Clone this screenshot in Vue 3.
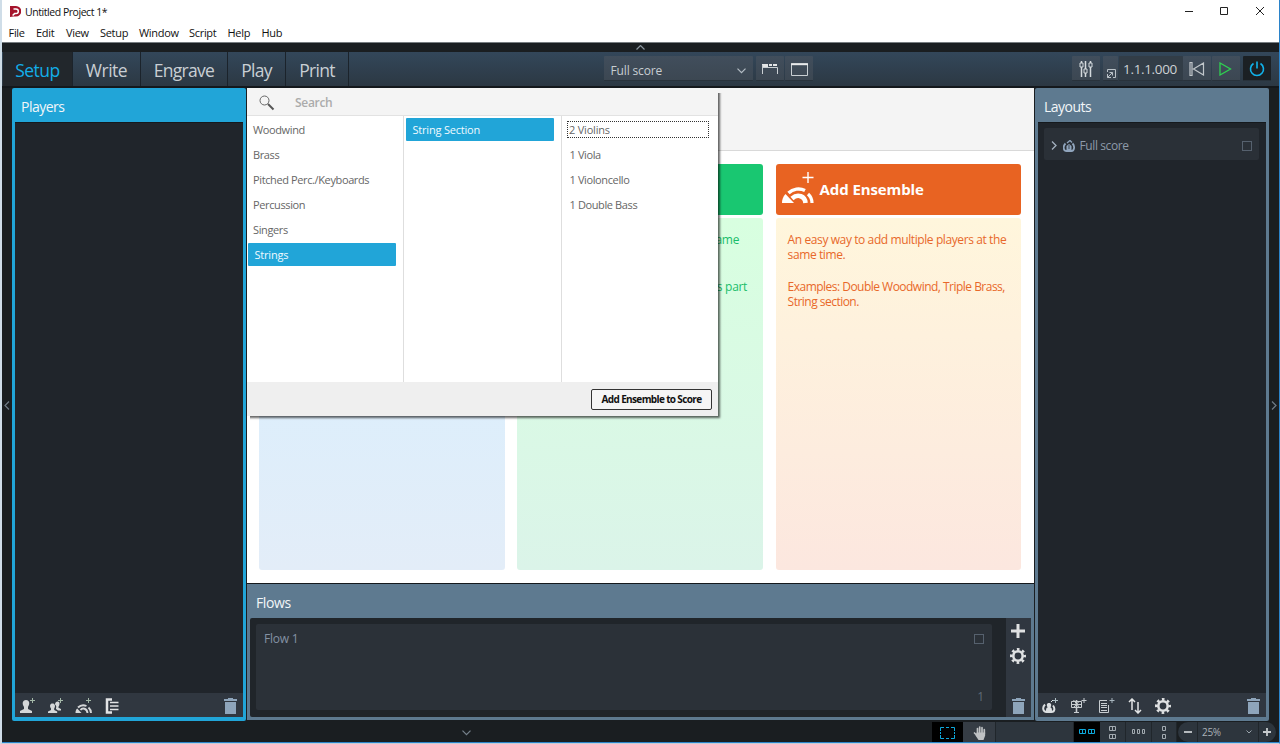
<script setup>
import { ref } from 'vue'

const menus = ['File', 'Edit', 'View', 'Setup', 'Window', 'Script', 'Help', 'Hub']
const modes = ['Setup', 'Write', 'Engrave', 'Play', 'Print']
const mode = ref('Setup')

const families = ['Woodwind', 'Brass', 'Pitched Perc./Keyboards', 'Percussion', 'Singers', 'Strings']
const family = ref('Strings')
const players = ['2 Violins', '1 Viola', '1 Violoncello', '1 Double Bass']
const player = ref('2 Violins')
</script>

<template>
<div class="window">
  <header class="titlebar">
    <svg class="logo" width="11" height="11" viewBox="0 0 11 11">
      <path d="M0 0H6A5 5 0 0 1 6 10.500H3.500L0 11Z" fill="#a5142c" />
      <path d="M3.500 3H6a2.300 2.300 0 0 1 0 4.600H4.600L2.600 9.500" fill="none" stroke="#fff" stroke-width="1.500" />
    </svg>
    <span class="title">Untitled Project 1*</span>
    <svg class="win-buttons" width="80" height="12" viewBox="0 0 80 12" fill="none" stroke="#222" stroke-width="1">
      <path d="M1 6.500H9M36.500 2.500h7v7h-7zM72 2l8 8M80 2l-8 8" />
    </svg>
  </header>
  <nav class="menubar">
    <span v-for="m in menus" :key="m" :class="'m-' + m.toLowerCase()">{{ m }}</span>
  </nav>

  <div class="collapse-top">
    <svg width="9" height="5" viewBox="0 0 9 5"><path d="M.5 4.500l4-4 4 4" fill="none" stroke="#8a959e" stroke-width="1.200" /></svg>
  </div>

  <div class="toolbar">
    <button v-for="m in modes" :key="m" class="mode" :class="['mode-' + m.toLowerCase(), {active: mode === m}]" @click="mode = m">{{ m }}</button>
    <div class="score-select tool">
      <span>Full score</span>
      <svg width="9" height="6" viewBox="0 0 9 6"><path d="M.5 .7l4 4 4-4" fill="none" stroke="#b4bdc5" stroke-width="1.200" /></svg>
    </div>
    <div class="tool view-a">
      <svg width="18" height="12" viewBox="0 0 18 12"><path d="M1 1h6v3H1zM8 1h3v2H8zM12 1h4v2h-4z" fill="#e4e6e7" /><path d="M1.500 2v9M1 4.500h15.500V11" fill="none" stroke="#c9cfd3" /></svg>
    </div>
    <div class="tool view-b">
      <svg width="17" height="13" viewBox="0 0 17 13"><path d="M.5 1h16v11.500H.5z" fill="none" stroke="#c9cfd3" /><path d="M0 1.200h17" stroke="#e8eaeb" stroke-width="2" /></svg>
    </div>
    <div class="tool mixer">
      <svg width="14" height="18" viewBox="0 0 14 18" fill="none" stroke="#d5dadd"><path d="M2.500 1v2M2.500 7v10M6.500 1v8M6.500 13v4M11.500 1v2M11.500 7v10" stroke-width="1.500" /><path d="M1 3h3v4H1zM5 9h3v4H5zM10 3h3v4h-3z" /></svg>
    </div>
    <div class="tool popout">
      <svg width="9" height="9" viewBox="0 0 9 9" fill="none" stroke="#b9c1c7"><path d="M.5 3V.5h8v8H6M.5 8.500L5.500 3.500M2.500 3.500h3v3M.5 5v3.500H4" /></svg>
    </div>
    <div class="tool time">1.1.1.000</div>
    <div class="tool rewind">
      <svg width="16" height="14" viewBox="0 0 16 14" fill="none" stroke="#c1c7cb" stroke-width="1.200"><path d="M1 .5h2v13H1zM14.500 1v12L4.500 7z" /></svg>
    </div>
    <div class="tool play">
      <svg width="13" height="14" viewBox="0 0 13 14"><path d="M1 1v12l10.500-6z" fill="none" stroke="#2fd051" stroke-width="1.300" /></svg>
    </div>
    <div class="tool power">
      <svg width="16" height="16" viewBox="0 0 16 16" fill="none" stroke="#11b3ec" stroke-width="1.600"><path d="M8 .5v7M4.500 2.500a6.500 6.500 0 1 0 7 0" /></svg>
    </div>
  </div>

  <main class="workspace">
    <div class="gutter">
      <svg width="6" height="9" viewBox="0 0 6 9"><path d="M5 .5l-4 4 4 4" fill="none" stroke="#6f7b86" stroke-width="1.200" /></svg>
    </div>

    <section class="panel players">
      <h2>Players</h2>
      <div class="panel-body"></div>
      <div class="panel-foot">
        <svg class="f-solo" width="17" height="17" viewBox="0 0 17 17"><path d="M1 16v-2l4-2v-2C2.500 6 4 3 7 3s4.500 3 2 7v2l4 2v2z" fill="#d5d7d8" /><path d="M13.500 1v5M11 3.500h5" stroke="#a4b8a8" /></svg>
        <svg class="f-section" width="17" height="17" viewBox="0 0 17 17"><path d="M1 16v-1.500l3-1.500v-1.500C2 8.500 3.500 6.500 5.500 6.500S9 8.500 7.200 11.500V13l3 1.500V16z" fill="#d5d7d8" /><path d="M8 7.500C8 4 12.800 3.500 12.500 7c0 1-.5 2-1 2.800v1l2.500 1.200v1.500h-3L9 12v-1c.8-1.300 0-2.500-1-3.500z" fill="#d5d7d8" /><path d="M13.500 1v5M11 3.500h5" stroke="#a4b8a8" /></svg>
        <svg class="f-ensemble" width="17" height="17" viewBox="0 0 17 17"><path d="M3 10.500A7.500 7.500 0 0 1 11.500 9M5.500 13c2-2.800 6.500-1.500 7 3M13.500 10.500c1.700 1.500 2.500 3.500 2.500 5.500" fill="none" stroke="#d5d7d8" stroke-width="1.900" /><path d="M.5 16c0-2 .5-3.500 1.700-4.500l4.300 4.500z" fill="#d5d7d8" /><path d="M13.500 1v5M11 3.500h5" stroke="#a4b8a8" /></svg>
        <svg class="f-group" width="14" height="16" viewBox="0 0 14 16" fill="none" stroke="#e2e4e5"><path d="M7 1.500H2v13h5" stroke-width="2.500" /><path d="M5 4.500h8.500M5 8h8.500M5 11.500h8.500" stroke-width="1.500" /></svg>
        <svg class="bin" width="13" height="16" viewBox="0 0 13 16" fill="#8ea5bb"><path d="M0 1h4V0h5v1h4v2H0zM1 4h11v12H1z" /></svg>
      </div>
    </section>

    <div class="center">
      <div class="start">
        <div class="start-top"></div>
        <div class="cards">
          <article class="card blue"><div class="card-head"></div><div class="card-body"></div></article>
          <article class="card green">
            <div class="card-head"></div>
            <div class="card-body"><p class="same">same</p><p class="part">s part</p></div>
          </article>
          <article class="card orange">
            <div class="card-head">
              <svg width="34" height="34" viewBox="0 0 34 34"><path d="M27 1v11M21.500 6.500h11" stroke="#fff" stroke-width="1.400" /><g fill="none" stroke="#fff"><path d="M7.500 22A14.500 14.500 0 0 1 24 19.500" stroke-width="3.400" /><path d="M11 27.500c6-5.500 13-2 13.500 4.500" stroke-width="4.600" /><path d="M27 23c2.800 2.500 4 5.500 4 9" stroke-width="3.200" /></g><path d="M1 32c0-3.500 1-6.500 3.500-9L13 32z" fill="#fff" /></svg>
              <b>Add Ensemble</b>
            </div>
            <div class="card-body"><p>An easy way to add multiple players at the<br>same time.</p><p class="examples">Examples: Double Woodwind, Triple Brass,<br>String section.</p></div>
          </article>
        </div>

        <div class="picker">
          <div class="search">
            <svg width="16" height="16" viewBox="0 0 16 16"><circle cx="5.500" cy="5.500" r="4.500" fill="none" stroke="#666" /><path d="M9 9l5.500 5.500" stroke="#555" stroke-width="2" /></svg>
            <span>Search</span>
          </div>
          <div class="columns">
            <ul class="families"><li v-for="f in families" :key="f" :class="{selected: f === family}" @click="family = f">{{ f }}</li></ul>
            <ul class="ensembles"><li class="selected">String Section</li></ul>
            <ul class="instruments"><li v-for="p in players" :key="p" :class="{focused: p === player}" @click="player = p">{{ p }}</li></ul>
          </div>
          <div class="picker-foot"><button>Add Ensemble to Score</button></div>
        </div>
      </div>

      <section class="flows">
        <h2>Flows</h2>
        <div class="flows-inner">
          <div class="flow-card">
            <span>Flow 1</span><i class="check"></i><small>1</small>
          </div>
          <div class="flow-tools">
            <svg width="14" height="14" viewBox="0 0 14 14"><path d="M7 0v14M0 7h14" stroke="#dfe1e2" stroke-width="3" /></svg>
            <svg class="gear" width="16" height="16" viewBox="0 0 16 16"><circle cx="8" cy="8" r="6.700" fill="none" stroke="#dfe1e2" stroke-width="2.600" stroke-dasharray="2.600 2.662" stroke-dashoffset="1.300" /><circle cx="8" cy="8" r="4.700" fill="none" stroke="#dfe1e2" stroke-width="2.600" /></svg>
            <svg class="bin" width="13" height="16" viewBox="0 0 13 16" fill="#8ea5bb"><path d="M0 1h4V0h5v1h4v2H0zM1 4h11v12H1z" /></svg>
          </div>
        </div>
      </section>
    </div>

    <section class="panel layouts">
      <h2>Layouts</h2>
      <div class="panel-body">
        <div class="layout-row">
          <svg width="6" height="9" viewBox="0 0 6 9"><path d="M1 .5l4 4-4 4" fill="none" stroke="#a4b2c0" stroke-width="1.300" /></svg>
          <svg class="score-icon" width="12" height="12" viewBox="0 0 12 12"><path d="M2.500 3.500C-.5 6.500.5 11 3.500 11h5c3 0 3.500-5 1-7.500" fill="none" stroke="#90a5bd" stroke-width="1.800" /><path d="M3.500 11V6L6 4l2.500 2v5z" fill="#90a5bd" /><path d="M4 3l3-2.500 2 2" fill="none" stroke="#90a5bd" stroke-width="1.300" /><path d="M6 5v4" stroke="#2a3038" stroke-width=".8" /></svg>
          <span>Full score</span>
          <i class="check"></i>
        </div>
      </div>
      <div class="panel-foot">
        <svg class="l-score" width="17" height="17" viewBox="0 0 17 17"><path d="M3 7.500c-3 3-2 7.500 1.500 7.500h5c3.500 0 3.500-4 1.500-6.500" fill="none" stroke="#dcdfe1" stroke-width="2" /><path d="M4 15c0-3 0-4.500 1.700-4.500C4 7.500 5 6 7 6s3 1.500 1.500 4.500C10 11 10 12 10 15z" fill="#dcdfe1" /><path d="M9 5l2-2" stroke="#dcdfe1" /><path d="M13.500 1v5M11 3.500h5" stroke="#aebfc5" /></svg>
        <svg class="l-part" width="17" height="17" viewBox="0 0 17 17" fill="none" stroke="#c8cdd1"><path d="M1.500 4.500h10v6h-10zM1.500 7.500h10M3.500 3l6 7.500M9.500 4l-6 6.500M4 15.500h5" /><path d="M6.500 3v12" stroke-width="1.600" /><path d="M14 1v5M11.500 3.500h5" /></svg>
        <svg class="l-custom" width="17" height="17" viewBox="0 0 17 17" fill="none" stroke="#c8cdd1"><path d="M9 3.500H1.500v12h9V8M3 6.500h6M3 8.500h6M3 10.500h6M3 13.500h6" /><path d="M14 1v5M11.500 3.500h5" stroke="#a8b6be" /></svg>
        <svg class="l-sort" width="14" height="16" viewBox="0 0 14 16" fill="none" stroke="#e3e5e6" stroke-width="1.500"><path d="M4 12V1M1 4l3-3 3 3M10 4v11M7 12l3 3 3-3" /></svg>
        <svg class="l-gear" width="16" height="16" viewBox="0 0 16 16"><circle cx="8" cy="8" r="6.700" fill="none" stroke="#dfe1e2" stroke-width="2.600" stroke-dasharray="2.600 2.662" stroke-dashoffset="1.300" /><circle cx="8" cy="8" r="4.700" fill="none" stroke="#dfe1e2" stroke-width="2.600" /></svg>
        <svg class="bin" width="13" height="16" viewBox="0 0 13 16" fill="#8ea5bb"><path d="M0 1h4V0h5v1h4v2H0zM1 4h11v12H1z" /></svg>
      </div>
    </section>

    <div class="gutter right">
      <svg width="6" height="9" viewBox="0 0 6 9"><path d="M1 .5l4 4-4 4" fill="none" stroke="#6f7b86" stroke-width="1.200" /></svg>
    </div>
  </main>

  <footer class="status">
    <svg class="down" width="9" height="6" viewBox="0 0 9 6"><path d="M.5 .7l4 4 4-4" fill="none" stroke="#76828c" stroke-width="1.200" /></svg>
    <div class="s-marquee"><svg width="15" height="12" viewBox="0 0 15 12"><path d="M.5 4V.5H4M6 .5h3M11 .5h3.500V4M14.500 5v2M14.500 8v3.500H11M9 11.500H6M4 11.500H.5V8M.5 7V5" fill="none" stroke="#0da9dc" /></svg></div>
    <div class="s-hand"><svg width="14" height="14" viewBox="0 0 14 14"><path d="M4.500 8V2.500M6.700 7V1M9 7V1.700M11.300 8V3.700M4.500 10L1.500 7" stroke="#bfc2c4" stroke-width="1.700" stroke-linecap="round" /><path d="M3.700 6.500h8.400v3.200L10.500 14h-5L2.500 9.500z" fill="#bfc2c4" /></svg></div>
    <div class="s-space"></div>
    <div class="s-cell first"><svg width="17" height="6" viewBox="0 0 17 6" fill="none" stroke="#0da9dc"><path d="M.5.500h6v4h-6zM3.500.500v4M9.500.500h6v4h-6zM12.500.500v4" /></svg></div>
    <div class="s-cell second"><svg width="8" height="13" viewBox="0 0 8 13" fill="none" stroke="#a3abb1"><path d="M.5.500h6v4h-6zM3.500.500v4M.5 8.500h6v4h-6zM3.500 8.500v4" /></svg></div>
    <div class="s-cell third"><svg width="13" height="6" viewBox="0 0 13 6" fill="none" stroke="#a3abb1"><path d="M.5.500h2v4h-2zM5.500.500h2v4h-2zM10.500.500h2v4h-2z" /></svg></div>
    <div class="s-cell fourth"><svg width="4" height="13" viewBox="0 0 4 13" fill="none" stroke="#a3abb1"><path d="M.5.500h3v4h-3zM.5 8.500h3v4h-3z" /></svg></div>
    <div class="s-minus"><svg width="8" height="8" viewBox="0 0 8 8"><path d="M0 4h8" stroke="#c6cacd" stroke-width="1.800" /></svg></div>
    <div class="s-zoom"><span>25%</span><svg width="6" height="4" viewBox="0 0 6 4"><path d="M.5 .5l2.500 2.500 2.500-2.500" fill="none" stroke="#9aa4ac" /></svg></div>
    <div class="s-plus"><svg width="8" height="8" viewBox="0 0 8 8"><path d="M0 4h8M4 0v8" stroke="#c6cacd" stroke-width="1.800" /></svg></div>
  </footer>
</div>
</template>

<style>
body { margin: 0; overflow: hidden; }
</style>

<style scoped>
* { box-sizing: border-box; }
.window {
  width: 1280px;
  height: 744px;
  display: flex;
  flex-direction: column;
  background: #1a1e21;
  border-left: 2px solid #cfdde8;
  border-right: 1px solid #2b83c9;
  border-bottom: 1px solid #c3ced9;
  font-family: "Open Sans", "Noto Sans", sans-serif;
  overflow: hidden;
}
svg { display: block; flex: none; }
button { font-family: inherit; }
h2, p, ul { margin: 0; padding: 0; }
.titlebar { height: 23px; background: #fff; display: flex; align-items: center; padding-left: 8px; flex: none; }
.title { font-size: 10.5px; letter-spacing: -0.45px; color: #111; margin-left: 4px; flex: 1; }
.win-buttons { margin: 0 15px 1px 0; }
.menubar { height: 20px; flex: none; background: #fff; border-bottom: 1px solid #777d81; display: flex; font-size: 11px; line-height: 20px; letter-spacing: -0.3px; color: #111; }
.menubar span { white-space: nowrap; }
.m-file { margin-left: 6.5px; width: 27.5px; }
.m-edit { width: 30px; }
.m-view { width: 34px; }
.m-setup { width: 39px; }
.m-window { width: 50px; }
.m-script { width: 38.5px; }
.m-help { width: 34px; }
.collapse-top { height: 9px; flex: none; display: flex; justify-content: center; align-items: center; }

.toolbar { height: 36px; flex: none; display: flex; background: linear-gradient(#33475a, #2c3843); border-bottom: 2px solid #14181c; padding-left: 1px; }
.mode { border: 0; padding: 2px 0 0; background: none; border-right: 1px solid #1b232b; color: #c9cfd4; font-size: 17.5px; letter-spacing: -0.7px; line-height: 32px; white-space: nowrap; }
.mode.active { background: #22272c; color: #12aee8; }
.mode-setup { width: 70px; letter-spacing: -0.5px; }
.mode-write { width: 68px; letter-spacing: -0.5px; }
.mode-engrave { width: 87px; }
.mode-play { width: 58px; }
.mode-print { width: 63px; }
.tool { height: 25px; margin-top: 4px; background: linear-gradient(#414e5c, #3c4752); display: flex; align-items: center; justify-content: center; border-radius: 1px; border-bottom: 1px solid #28323b; padding-top: 1px; }
.score-select { width: 149px; margin-left: 255px; justify-content: space-between; padding: 5px 7px 0 6.5px; color: #c8cdd1; font-size: 12px; letter-spacing: -0.15px; }
.view-a { width: 28px; margin-left: 3px; }
.view-b { width: 28px; margin-left: 1px; }
.view-b svg { margin: 1px 0 0 1px; }
.mixer { width: 28px; margin-left: 259px; }
.popout { width: 15px; margin-left: 3px; padding: 10px 0 0 1px; }
.time { width: 64px; margin-left: 1px; background: #323d47; color: #cdd1d4; font-size: 13.5px; letter-spacing: -0.35px; padding: 1px 2px 0 0; }
.rewind { width: 28px; padding-right: 1px; }
.play { width: 28px; margin-left: 1px; padding-right: 2px; }
.power { width: 28px; margin-left: 3px; background: #1b2024; padding-top: 2px; }

.workspace { height: 634px; flex: none; display: flex; }
.gutter { width: 10px; flex: none; display: flex; align-items: center; justify-content: center; padding-top: 1px; }
.gutter.right { width: 10px; padding-right: 1px; }
.panel { width: 234px; height: 633px; padding: 0 3px 4px; display: flex; flex-direction: column; border-radius: 2px; background: #5e7a90; }
.players { background: #21a5d8; }
.layouts { margin-left: 1px; }
h2 { height: 34px; padding: 2px 0 0 6px; font-weight: 400; font-size: 14px; line-height: 34px; letter-spacing: -0.4px; color: #f2f6f8; }
.players h2 { letter-spacing: -0.5px; }
.layouts h2 { letter-spacing: -0.5px; }
.panel-body { flex: 1; background: #20252b; border-top: 1px solid #15191d; }
.panel-foot { height: 24px; background: #303740; display: flex; align-items: center; padding: 1px 0 0 4px; }
.panel-foot .bin { margin-left: auto; margin-right: 6px; }
.f-section { margin-left: 11px; }
.f-ensemble { margin-left: 11px; }
.f-group { margin-left: 13px; }
.layout-row { height: 32px; margin: 5px 7px 0 6px; padding: 3px 7px 0; background: #2a3037; border-radius: 2px; display: flex; align-items: center; color: #8d9aa9; font-size: 12px; letter-spacing: -0.35px; }
.score-icon { margin: 0 4.5px 0 6px; }
.layout-row span { letter-spacing: -0.4px; }
.check { width: 10px; height: 10px; border: 1px solid #56616e; margin-left: auto; }
.layout-row span { letter-spacing: -0.4px; }
.l-part { margin-left: 11px; }
.l-custom { margin-left: 11px; }
.l-sort { margin-left: 13px; }
.l-gear { margin-left: 13px; }

.center { width: 787px; margin-left: 1px; flex: none; }
.start { position: relative; height: 496px; background: #fff; border-bottom: 1px solid #15191d; }
.start-top { height: 63px; background: #f4f4f4; border-bottom: 1px solid #d9d9d9; }
.cards { display: flex; gap: 12.5px; padding: 12.500px 12px; }
.card { width: 245.8px; }
.card-head { height: 51.5px; border-radius: 3px; display: flex; align-items: center; }
.card-body { height: 351.5px; margin-top: 3px; border-radius: 3px; padding: 13.5px 12px; font-size: 12px; line-height: 15.7px; letter-spacing: -0.4px; white-space: nowrap; }
.card-body p + p { margin-top: 15.7px; }
.card-body .examples { letter-spacing: -0.52px; }
.blue .card-head { background: #2b8fd8; }
.blue .card-body { background: linear-gradient(#d6efff, #e3edf8); }
.green .card-head { background: #19c771; }
.green .card-body { background: linear-gradient(#d8ffe0, #dbf4e9); color: #19bd6b; text-align: right; letter-spacing: -0.3px; }
.same { padding-right: 12px; }
.part { padding-right: 4px; }
.green .card-body p + p { margin-top: 31.4px; }
.orange .card-head { background: #e86322; color: #fff; padding-left: 5px; }
.orange .card-head b { font-size: 15px; letter-spacing: -0.1px; margin-left: 5px; }
.orange .card-head svg { margin-top: -3px; }
.orange .card-body { background: linear-gradient(#fff6dc, #fce7df); color: #e8682a; }

.picker { position: absolute; left: 0; top: 0; width: 471px; height: 328px; background: #fff; box-shadow: 1px 1px 2px 1px rgba(0,0,0,0.6); clip-path: polygon(0 0, 471px 0, 471px 5px, 476px 5px, 476px 333px, 3px 333px, 3px 328px, 0 328px); }
.search { height: 28px; background: #f4f4f4; border-bottom: 1px solid #e2e2e2; display: flex; align-items: center; padding: 2px 0 0 12px; }
.search span { margin-left: 20px; font-size: 12px; font-weight: 600; color: #ababab; letter-spacing: -0.3px; }
.columns { height: 266px; display: flex; }
.columns ul { list-style: none; padding: 2px 7px 0 1px; border-right: 1px solid #dedede; font-size: 11px; letter-spacing: -0.38px; color: #666; }
.columns li { height: 23px; margin-bottom: 2px; padding-left: 5px; line-height: 24px; white-space: nowrap; }
.families { width: 157px; }
.columns .ensembles { width: 158px; padding-left: 2px; }
.columns .instruments { flex: 1; border: 0; padding-left: 5px; padding-right: 9px; }
.columns .instruments li { padding-left: 2.5px; }
.columns .selected { background: #21a5d8; color: #f0faff; border-radius: 1px; padding-left: 6.5px; letter-spacing: -0.2px; }
.columns .instruments .focused { height: 17px; margin: 3px 0 5px; line-height: 15.5px; padding-left: 1px; border: 1px dotted #333; letter-spacing: -0.2px; }
.picker-foot { height: 34px; background: #efefef; display: flex; justify-content: flex-end; align-items: center; padding-right: 6px; }
.picker-foot button { width: 121px; height: 21px; border: 1px solid #333; border-radius: 2px; background: #f5f5f5; font-size: 10px; font-weight: 700; padding: 0; letter-spacing: -0.64px; color: #111; white-space: nowrap; }

.flows { height: 136px; padding: 0 3px 3px; background: #5e7a90; }
.flows-inner { height: 99px; background: #20252a; display: flex; padding: 6px 0 0 6px; border-radius: 2px; }
.flow-card { width: 736px; height: 86px; background: #2b3138; border-radius: 2px; display: grid; grid-template-columns: 1fr auto; grid-template-rows: 1fr auto; padding: 6px 8px 5px; color: #8492a4; font-size: 12px; letter-spacing: -0.2px; }
.flow-card .check { margin-top: 4px; }
.flow-card small { grid-column: 2; text-align: right; font-size: 12px; color: #5f6a76; }
.flow-tools { width: 25px; margin: -6px 0 0 auto; background: #303740; display: flex; flex-direction: column; align-items: center; padding: 6px 1px 3px 0; }
.flow-tools .gear { margin-top: 10px; }
.flow-tools .bin { margin-top: auto; }

.status { height: 21px; flex: none; display: flex; border-bottom: 1px solid #2b83c9; align-items: stretch; }
.status > div { display: flex; align-items: center; justify-content: center; background: #2d353d; border-right: 1px solid #20262b; }
.down { margin: 8px 0 0 460px; }
.status .s-marquee { width: 31px; margin-left: 461px; background: #000; border: 0; padding-top: 1px; }
.status .s-hand { width: 33px; background: #353c44; padding: 1px 0 0 2px; }
.s-space { width: 78px; }
.status .first { width: 26px; background: #000; border: 0; }
.second { width: 26px; }
.third { width: 26px; }
.fourth { width: 25px; }
.status .s-minus { width: 20px; border-radius: 10px 0 0 10px; margin-left: 1px; }
.status .s-zoom { width: 61px; justify-content: space-between; padding: 0 6px 0 4px; color: #aab1b7; font-size: 10px; letter-spacing: -0.3px; }
.status .s-plus { width: 17px; border-radius: 0 10px 10px 0; border: 0; padding-right: 1px; }
</style>
